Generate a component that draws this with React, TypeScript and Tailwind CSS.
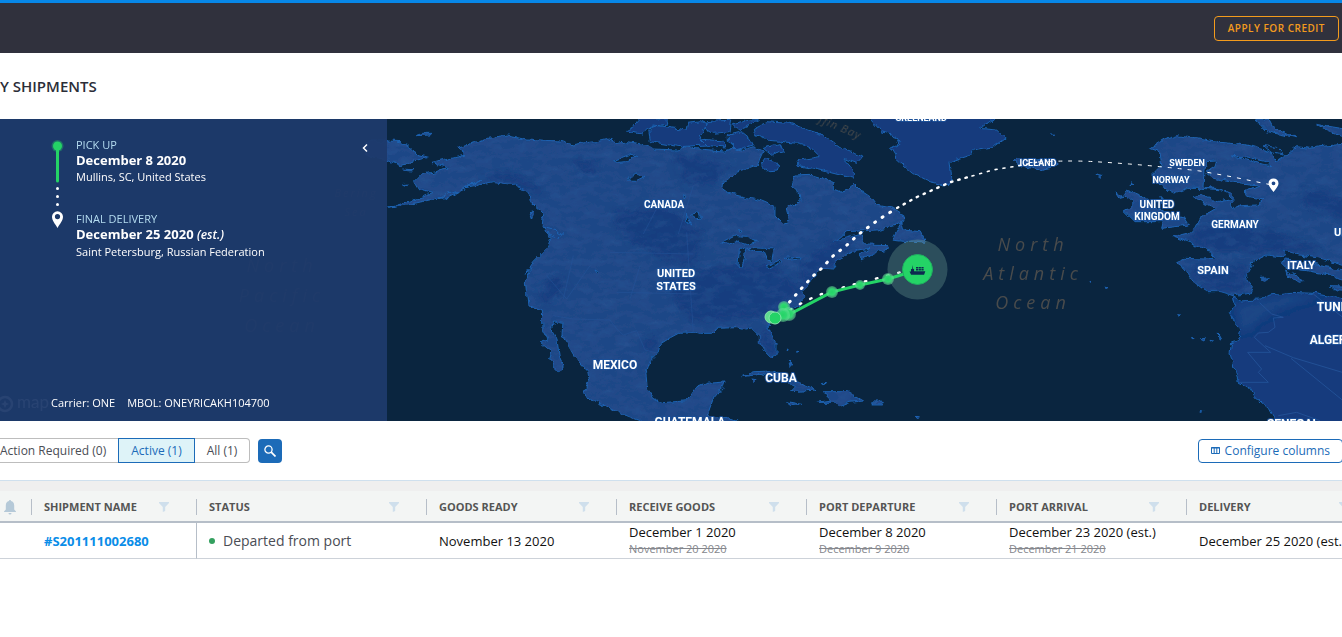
import React from "react";

const LAND = "#1f4787";
const DEEP = "#123b7d";
const COAST = "#1b62b3";
const OCEAN = "#0a253f";

const landPaths = [
  // North and Central America
  "M1371 85L1426 70 1461 58 1526 48 1581 60 1636 64 1681 66 1716 78 1761 70 1791 68 1826 60 1851 74 1881 68 1941 78 1961 90 2031 93 2051 83 2081 88 2121 92 2170 96 2200 88 2230 93 2260 83 2290 96 2280 118 2275 136 2210 160 2168 188 2165 208 2185 223 2240 236 2285 246 2325 263 2325 288 2350 313 2368 306 2362 268 2400 248 2398 223 2375 203 2387 168 2430 166 2470 178 2500 188 2500 210 2525 220 2550 210 2560 193 2580 213 2610 233 2630 258 2680 268 2705 283 2712 306 2690 318 2630 333 2540 338 2500 371 2525 358 2590 340 2585 363 2600 378 2665 380 2670 390 2640 396 2585 420 2578 408 2610 388 2570 393 2530 413 2500 428 2505 450 2465 448 2445 463 2430 488 2405 513 2415 538 2400 556 2370 568 2340 583 2305 603 2305 628 2328 673 2328 706 2312 716 2290 693 2278 673 2278 648 2260 630 2235 633 2210 626 2150 628 2135 643 2100 643 2081 638 2041 640 2011 656 1976 678 1971 703 1951 723 1938 763 1941 803 1961 838 1989 851 2061 845 2091 803 2121 790 2172 786 2165 808 2145 833 2125 888 2210 905 2210 940 1921 940 1921 905 1861 883 1821 863 1786 848 1751 823 1766 788 1761 758 1721 708 1701 673 1686 650 1689 610 1661 606 1654 633 1671 663 1679 718 1693 748 1676 758 1649 723 1656 698 1621 670 1644 663 1629 633 1627 573 1584 558 1576 488 1594 448 1576 466 1601 428 1641 388 1653 356 1626 323 1631 283 1591 248 1586 218 1546 198 1481 188 1436 198 1396 206 1446 183 1371 218 1311 238 1221 258 1161 268 1241 243 1301 223 1256 213 1241 188 1261 168 1351 148 1296 133 1376 113 1401 108Z",
  // Chukotka
  "M1100 66L1161 66 1206 68 1236 88 1251 106 1286 115 1236 128 1201 140 1161 123 1100 110Z",
  "M1246 50L1268 43 1296 43 1290 48Z",
  "M1205 150L1240 152 1238 156 1212 154ZM1205 197L1226 195 1222 200Z",
  "M1314 238L1345 224 1376 220 1345 236Z",
  // Vancouver Island and Haida Gwaii
  "M1630 325L1665 335 1688 348 1675 358 1640 340ZM1586 278L1602 276 1594 300Z",
  // Newfoundland
  "M2675 363L2705 308 2712 333 2760 338 2780 373 2700 366Z",
  // Iceland
  "M3040 128L3050 118 3080 125 3140 120 3172 132 3150 146 3115 152 3070 142Z",
  // Great Britain and Ireland
  "M3390 268L3370 273 3405 308 3490 308 3485 328 3565 318 3550 293 3490 278 3430 233 3380 213 3370 228 3405 253ZM3350 222L3372 235 3360 238ZM3392 188L3402 196 3390 197ZM3290 168L3308 172 3300 178Z",
  // Europe with Scandinavia
  "M3450 88L3490 63 3530 50 3580 58 3640 68 3740 78 3810 98 3820 118 3830 128 3860 108 3890 83 3930 88 3960 83 4060 73 4060 448 3960 418 3900 408 3850 393 3860 408 3840 413 3800 408 3760 428 3750 453 3735 478 3757 503 3750 523 3700 530 3660 518 3620 518 3580 488 3545 438 3527 428 3550 418 3610 420 3645 418 3620 388 3520 353 3580 338 3600 298 3650 268 3600 248 3580 233 3605 226 3655 250 3700 240 3670 213 3605 208 3560 208 3520 223 3480 198 3455 168 3485 138 3480 98Z",
  "M3765 0L3800 38 3890 56 3820 28 3805 0ZM3950 16L4060 34 4060 66 3980 33Z",
  // Italy, Balkans and the western islands
  "M3840 428L3860 420 3960 440 4060 458 4060 500 4000 470 3920 455 3860 448ZM3860 453L3910 488 3895 490 3865 470ZM3990 503L4060 505 4060 515 4000 512ZM3780 478L3810 476 3790 484Z",
  // Caribbean
  "M2225 773L2260 758 2320 756 2380 783 2450 813 2375 818 2390 803 2340 778 2280 766ZM2470 818L2540 818 2588 846 2550 850 2518 863 2500 850 2450 850 2495 843ZM2360 848L2405 856 2375 860ZM2615 848L2650 850 2645 858 2618 858Z",
  "M2255 780L2268 782 2262 788ZM2365 720L2378 738 2370 738ZM2358 690L2362 692 2360 694ZM2388 696L2391 698 2387 700ZM2467 793L2477 794 2470 797ZM2748 892L2758 893 2752 902Z",
  // Atlantic islands
  "M3312 505L3324 505 3320 509ZM3530 584L3542 585 3535 588ZM3574 653L3584 653 3579 657ZM3600 660L3616 658 3612 666ZM3630 664L3641 666 3636 670ZM3655 645L3662 658 3657 660ZM3600 878L3608 878 3604 882ZM3270 490L3274 491 3271 493ZM3154 48L3161 48 3158 51Z",
];

const deepPaths = [
  // Greenland
  "M2600 -20L2610 0 2645 38 2690 53 2700 73 2672 88 2690 118 2740 163 2790 188 2845 200 2855 178 2850 128 2910 108 2920 93 2980 83 3015 58 2990 33 2940 28 2980 0 2980 -20Z",
  // Arctic archipelago
  "M1876 36L1901 23 1921 0 1996 -5 2001 15 1950 25 1925 45ZM1946 33L1961 18 2061 33 2066 13 2101 8 2121 18 2101 48 2116 78 2041 83 1951 68Z",
  "M2120 8L2195 3 2190 38 2140 43 2115 28ZM2185 48L2225 38 2250 58 2260 78 2210 92 2185 68ZM2200 18L2250 3 2275 2 2255 18 2215 32ZM2100 60L2170 66 2180 84 2120 80Z",
  // Baffin Island
  "M2260 28L2300 8 2370 13 2410 28 2470 48 2520 83 2590 110 2570 133 2530 118 2560 153 2560 178 2480 158 2440 148 2390 138 2400 123 2460 113 2430 83 2390 73 2350 68 2300 63 2265 48Z",
  "M2285 138L2300 118 2340 138 2335 153 2300 156ZM2290 88L2340 73 2350 98 2315 108Z",
  // North-west Africa
  "M3700 533L3720 546 3780 543 3810 528 3870 520 3940 523 3990 533 4060 545 4060 940 3825 940 3825 905 3805 868 3765 833 3750 808 3715 788 3700 738 3690 703 3695 668 3715 663 3722 633 3700 608 3688 583 3705 558Z",
];

const waterPaths = [
  // Great Lakes and Canadian lakes
  "M2165 372L2210 350 2240 352 2272 368 2240 374 2215 366 2185 376ZM2218 392L2238 385 2232 420 2225 445 2214 440ZM2240 385L2290 388 2322 390 2315 425 2300 420 2290 398 2265 398ZM2295 443L2340 425 2345 430 2310 446ZM2352 418L2400 415 2403 420 2360 424Z",
  "M1841 125L1885 108 1910 112 1880 128 1850 130ZM1881 183L1905 165 1935 172 1910 184ZM2078 285L2098 282 2101 300 2090 303ZM2058 282L2075 318 2060 305ZM2047 232L2056 228 2050 240ZM1782 450L1793 456 1790 462ZM2215 332L2226 333 2222 338Z",
  // Baltic Sea, White Sea and the Gulf of Finland
  "M3615 154L3620 128 3650 126 3645 143 3620 160 3640 178 3700 190 3780 198 3765 205 3740 212 3738 235 3790 243 3770 258 3720 260 3700 270 3690 255 3705 238 3690 223 3660 210 3612 204Z",
  "M3695 113L3730 112 3800 128 3815 140 3790 136 3750 126ZM3790 80L3830 85 3850 108 3820 102ZM3480 232L3495 250 3485 254Z",
];

const placeLabels: [string, number, number, number][] = [
  ["CANADA", 664, 89, 10],
  ["UNITED", 676, 158, 11],
  ["STATES", 676, 171, 11],
  ["MEXICO", 615, 250, 12],
  ["CUBA", 781, 263, 12],
  ["GUATEMALA", 690, 307, 12],
  ["GREENLAND", 921, 2, 9],
  ["ICELAND", 1038, 47, 9],
  ["SWEDEN", 1187, 47, 9],
  ["NORWAY", 1171, 64, 9],
  ["UNITED", 1157, 89, 10],
  ["KINGDOM", 1157, 101, 10],
  ["GERMANY", 1235, 109, 10],
  ["UKRAINE", 1357, 117, 11],
  ["SPAIN", 1213, 155, 11],
  ["ITALY", 1301, 150, 11],
  ["TUNISIA", 1340, 192, 12],
  ["ALGERIA", 1334, 225, 12],
  ["SENEGAL", 1293, 309, 12],
];

const seaLabels: [string, number, number][] = [
  ["North", 1033, 132],
  ["Atlantic", 1033, 161],
  ["Ocean", 1033, 190],
  ["North", 282, 153],
  ["Pacific", 282, 183],
  ["Ocean", 282, 213],
];

function MapCanvas() {
  return (
    <svg
      className="absolute inset-0 h-full w-full"
      viewBox="0 0 1342 302"
      preserveAspectRatio="xMinYMid slice"
      aria-label="Shipment route map"
      role="img"
    >
      <defs>
        <filter id="rough" x="-5%" y="-5%" width="110%" height="110%">
          <feTurbulence type="fractalNoise" baseFrequency="0.13" numOctaves="3" seed="4" result="n" />
          <feDisplacementMap in="SourceGraphic" in2="n" scale="6" xChannelSelector="R" yChannelSelector="G" />
        </filter>
        <filter id="soft" x="-20%" y="-20%" width="140%" height="140%">
          <feGaussianBlur stdDeviation="9" />
        </filter>
        <filter id="relief" x="0" y="0" width="100%" height="100%">
          <feTurbulence type="fractalNoise" baseFrequency="0.02 0.05" numOctaves="3" seed="9" />
          <feColorMatrix values="0 0 0 0 0.06  0 0 0 0 0.2  0 0 0 0 0.46  1.6 0 0 0 -0.62" />
        </filter>
        <clipPath id="landClip">
          {landPaths.map((d) => (
            <path key={d} d={d} />
          ))}
        </clipPath>
        <radialGradient id="node">
          <stop offset="0" stopColor="#24d366" />
          <stop offset="0.5" stopColor="#2fd770" />
          <stop offset="1" stopColor="#6fe39c" stopOpacity="0.45" />
        </radialGradient>
      </defs>
      <rect x="-600" width="3200" height="302" fill={OCEAN} />
      <g filter="url(#rough)">
        <g transform="scale(.33333)" strokeLinejoin="round">
          <g fill={LAND} stroke={COAST} strokeWidth="3">
            {landPaths.map((d) => (
              <path key={d} d={d} />
            ))}
          </g>
          <g clipPath="url(#landClip)">
            <g filter="url(#soft)" fill={DEEP} opacity=".75">
              <path d="M1440 165L1520 160 1600 190 1640 230 1560 205 1480 180ZM1720 120L1790 130 1790 170 1740 160ZM1840 280L2000 260 2110 340 2080 440 1990 420 1860 350ZM2020 100L2200 130 2150 190 2060 200ZM1610 510L1680 460 1700 500 1640 560ZM2000 480L2110 450 2320 430 2400 520 2300 590 2080 610 2030 560ZM1930 670L1970 640 1960 720ZM2270 640L2320 640 2330 710 2290 690ZM2480 370L2580 350 2520 420 2400 540 2400 440ZM3560 350L3650 300 3800 330 3980 390 3800 400 3640 400ZM3560 440L3740 440 3740 520 3620 510ZM3900 200L4040 240 4040 300 3920 270Z" />
            </g>
            <rect x="1100" width="2960" height="906" filter="url(#relief)" opacity=".25" />
          </g>
          <g fill={DEEP} stroke={COAST} strokeWidth="3">
            {deepPaths.map((d) => (
              <path key={d} d={d} />
            ))}
          </g>
          <path
            d="M3710 560L3860 530 3960 530 3840 570 3780 600 3740 640 3720 620Z"
            fill="#244d8b"
            opacity=".6"
            filter="url(#soft)"
          />
          <g fill={OCEAN} stroke={COAST} strokeWidth="3">
            {waterPaths.map((d) => (
              <path key={d} d={d} />
            ))}
          </g>
        </g>
      </g>
      <g transform="scale(.33333)" fill="none" stroke="#24549a" strokeWidth="2.5">
        <path d="M3779 551L3815 585 3850 595 3820 597 3825 625 3805 640 3775 642 3763 655 3812 700 3743 700 3785 750 3775 760 3805 790 3718 790M3795 680L3880 716 4060 770M3873 718L4060 870M3940 525L4060 620M3835 890L3890 880 3960 905" />
        <path
          d="M1660 590L1720 600 1830 603 1850 630 1870 648 1910 635 1935 693 1971 702M1640 470L1700 540 1770 440M1720 410L1690 540M1890 540L1920 440M1830 400L2080 405M1850 520L2090 525M2060 340L2080 640M1930 345L1985 240M2035 345L2080 200"
          opacity=".6"
        />
      </g>

      <g fill="#56534f" fontFamily="'Open Sans', sans-serif" fontStyle="italic" opacity=".85">
        {seaLabels.map(([text, x, y]) => (
          <text key={text + x + y} x={x} y={y} textAnchor="middle" className="text-[18px] tracking-[5px]">
            {text}
          </text>
        ))}
        <text x="818" y="3" className="text-[11px] tracking-[1px]" transform="rotate(23 818 3)">
          ffin Bay
        </text>
        <text x="356" y="78" textAnchor="middle" className="text-[11px] tracking-[2px]">
          Bering
        </text>
        <text x="356" y="97" textAnchor="middle" className="text-[11px] tracking-[2px]">
          Sea
        </text>
      </g>
      <g opacity=".9">
        <circle cx="5" cy="285" r="7" fill="none" stroke="#fff" strokeWidth="2.5" />
        <path d="M5 281l1.2 2.8 2.8 1.2-2.8 1.2L5 289l-1.200-2.800L1 285l2.800-1.200z" fill="#fff" />
        <text x="17" y="289" fill="#fff" className="text-[17px]" fontFamily="Lato, sans-serif">
          map
        </text>
      </g>
      <g
        fill="#fff"
        stroke="#1b5098"
        strokeWidth="2"
        strokeLinejoin="round"
        paintOrder="stroke"
        fontFamily="Roboto, sans-serif"
        fontWeight="700"
        textAnchor="middle"
      >
        {placeLabels.map(([text, x, y, size]) => (
          <text key={text + x + y} x={x} y={y} fontSize={size}>
            {text}
          </text>
        ))}
      </g>

      <g fill="none" stroke="#fff" strokeLinecap="round">
        <path
          d="M777 196L787 186 800 171 813 157 821 150 833 137 847 126 859 115 878 101 897 89"
          strokeWidth="3"
          strokeDasharray="1 8"
        />
        <path d="M897 89L917 78 937 69 951 63 972 57" strokeWidth="2.4" strokeDasharray="1.5 6" />
        <path d="M972 57L993 51 1017 47 1038 43" strokeWidth="1.6" strokeDasharray="2 6" />
        <path
          d="M1038 43Q1073 41 1100 43Q1150 46 1200 52L1233 58 1272 66"
          strokeWidth="1"
          strokeLinecap="butt"
          strokeDasharray="4 6"
        />
        <path d="M790 191Q810 178 834 171T917 149" strokeWidth="2.4" strokeDasharray="1.5 10" />
      </g>
      <circle cx="917.5" cy="150.5" r="30" fill="#7fae9f" opacity=".3" />
      <path d="M775 199L788 196 832 173 860 166 888 160 917 151" fill="none" stroke="#24d366" strokeWidth="3" />
      <g fill="url(#node)">
        <circle cx="784" cy="188" r="6" />
        <circle cx="832" cy="173" r="6" />
        <circle cx="860" cy="166" r="5" />
        <circle cx="888" cy="160" r="6" />
        <circle cx="789" cy="195" r="7" />
        <circle cx="783" cy="196" r="7" />
      </g>
      <circle cx="771" cy="198" r="6" fill="#5fdc90" stroke="#8be5ac" />
      <circle cx="775" cy="199" r="6" fill="#24d366" stroke="#8be5ac" />
      <circle cx="917.5" cy="150.5" r="15" fill="#24d366" stroke="#1fae61" strokeWidth="1" />
      <g fill="#0d2a50">
        <path d="M909.5 152.5h1.500v-2.500h1.200l.4-4 .6 4h.9v2.300H925.300l-1.200 3.400h-13z" />
        <path d="M916 148h2.200v1.600H916zM918.700 148h2.200v1.600h-2.200zM921.400 148h2.200v1.600h-2.200zM916 150.100h2.200v1.500H916zM918.700 150.100h2.200v1.500h-2.200zM921.400 150.100h2.200v1.500h-2.200z" />
      </g>
      <path
        d="M1273.5 73c-2.800-3.800-5-6.200-5-8.600a5 5 0 0 1 10 0c0 2.400-2.200 4.800-5 8.600zm0-10.600a1.900 1.900 0 1 0 0 3.800 1.900 1.900 0 0 0 0-3.800z"
        fill="#fff"
        fillRule="evenodd"
      />
    </svg>
  );
}

function RoutePanel() {
  return (
    <div className="relative flex h-[302px] w-[387px] flex-col justify-between bg-[#1d3a6c]/95 text-white">
      <div className="flex items-start pt-[18px]">
        <svg className="ml-[50px] mt-[2px] h-[90px] w-4 shrink-0" viewBox="0 0 16 90" aria-hidden="true">
          <circle cx="7.5" cy="7" r="6" fill="#24d366" opacity=".35" />
          <circle cx="7.5" cy="7" r="4.5" fill="#24d366" />
          <path d="M7.500 7v35" stroke="#24d366" strokeWidth="3" strokeLinecap="round" />
          <g fill="#fff">
            <circle cx="7.5" cy="49.5" r="1.5" />
            <circle cx="7.5" cy="57.5" r="1.5" />
            <circle cx="7.5" cy="65.5" r="1.5" />
            <path
              d="M7.500 89C4.800 84.500 2 81.500 2 77.800a5.500 5.500 0 0 1 11 0c0 3.700-2.800 6.700-5.500 11.200zm0-14a2.600 2.600 0 1 0 0 5.200 2.600 2.600 0 0 0 0-5.200z"
              fillRule="evenodd"
            />
          </g>
        </svg>
        <div className="ml-[10px] flex flex-1 flex-col gap-[26px]">
          <div className="text-[11px] font-medium leading-4">
            <p className="text-[#b4dcf0]">PICK UP</p>
            <p className="text-[13px] font-bold leading-[15px]">December 8 2020</p>
            <p className="leading-[17px]">Mullins, SC, United States</p>
          </div>
          <div className="text-[11px] font-medium leading-4">
            <p className="text-[#b4dcf0]">FINAL DELIVERY</p>
            <p className="text-[13px] font-bold leading-[15px]">
              December 25 2020 <em className="text-xs font-semibold">(est.)</em>
            </p>
            <p className="leading-[17px]">Saint Petersburg, Russian Federation</p>
          </div>
        </div>
        <button type="button" aria-label="Collapse panel" className="mr-[18px] mt-[6px]">
          <svg width="8" height="10" viewBox="0 0 8 10" fill="none" stroke="#fff" strokeWidth="1.5">
            <path d="M6 1.500L2.500 5 6 8.500" />
          </svg>
        </button>
      </div>
      <p className="flex gap-3 pb-[10px] pl-[51px] text-[11px] font-medium leading-4">
        <span>Carrier: ONE</span>
        <span>MBOL: ONEYRICAKH104700</span>
      </p>
    </div>
  );
}

function FilterIcon() {
  return (
    <svg width="10" height="10" viewBox="0 0 10 10" fill="#cfdfec" aria-hidden="true">
      <path d="M0 0h10v1L6.200 5v4L3.800 10V5L0 1z" />
    </svg>
  );
}

type Column = { title: string; width: string; value: React.ReactNode; was?: string };

const columns: Column[] = [
  {
    title: "SHIPMENT NAME",
    width: "w-[165px]",
    value: (
      <a href="#shipment" className="font-bold text-[#0a8de8]">
        #S201111002680
      </a>
    ),
  },
  {
    title: "STATUS",
    width: "w-[230px]",
    value: (
      <span className="flex items-center gap-2 text-sm text-[#4a4d55]">
        <span className="h-[6px] w-[6px] rounded-full bg-[#34a05f]" />
        Departed from port
      </span>
    ),
  },
  { title: "GOODS READY", width: "w-[190px]", value: "November 13 2020" },
  { title: "RECEIVE GOODS", width: "w-[190px]", value: "December 1 2020", was: "November 20 2020" },
  { title: "PORT DEPARTURE", width: "w-[190px]", value: "December 8 2020", was: "December 9 2020" },
  { title: "PORT ARRIVAL", width: "w-[190px]", value: "December 23 2020 (est.)", was: "December 21 2020" },
  { title: "DELIVERY", width: "w-[190px]", value: "December 25 2020 (est.)" },
];

function ShipmentTable() {
  return (
    <div className="overflow-hidden border-t border-[#cfe0ee] bg-[#efefef] pt-[10px]">
      <table className="w-[1377px] table-fixed border-separate border-spacing-0 bg-white text-left">
        <thead>
          <tr className="h-8 bg-[#f3f5f4]">
            <th className="w-8 border-b-2 border-[#b6bec8] p-0 pt-[2px] align-middle">
              <div className="flex h-4 items-center border-r border-[#b6bec8] pl-1">
                <svg width="12" height="15" viewBox="0 0 12 15" fill="#b5c9d8" role="img" aria-label="Alerts">
                  <path d="M6 0c.7 0 1 .5 1 1 2 .5 3.200 2 3.200 4.500v4L12 11.500V12H0v-.5l1.800-2v-4C1.800 3 3 1.500 5 1c0-.5.3-1 1-1zM4.500 13h3a1.500 1.500 0 0 1-3 0z" />
                </svg>
              </div>
            </th>
            {columns.map((c) => (
              <th key={c.title} className={`${c.width} border-b-2 border-[#b6bec8] p-0 pt-[2px] align-middle`}>
                <div className="flex h-4 items-center justify-between border-r border-[#b6bec8] pl-3 pr-[27px] text-[11px] font-bold leading-4 text-[#555]">
                  {c.title}
                  <FilterIcon />
                </div>
              </th>
            ))}
          </tr>
        </thead>
        <tbody>
          <tr className="h-9 text-[13px] leading-4 text-[#111]">
            <td className="border-b border-[#cdd2d9] p-0" />
            {columns.map((c) => (
              <td
                key={c.title}
                className={`${c.title === "SHIPMENT NAME" ? "border-r border-r-[#b6bec8]" : ""} border-b border-b-[#cdd2d9] py-0 pl-3 pr-0 align-middle whitespace-nowrap`}
              >
                {c.value}
                {c.was && <del className="block text-[11px] leading-[17px] text-[#85878d]">{c.was}</del>}
              </td>
            ))}
          </tr>
        </tbody>
      </table>
    </div>
  );
}

export default function App() {
  return (
    <div className="min-h-screen overflow-hidden bg-white font-['Open_Sans','Noto_Sans',sans-serif]">
      <header className="flex h-[53px] items-center justify-end border-t-[3px] border-[#0787e8] bg-[#30313d] pr-[3px]">
        <button
          type="button"
          className="h-[25px] rounded border border-[#f39b1d] px-[13px] text-[10px] font-semibold tracking-[0.5px] text-[#f39b1d]"
        >
          APPLY FOR CREDIT
        </button>
      </header>
      <main>
        <h1 className="flex h-[66px] items-center text-[15px] font-semibold text-[#2b2d38]">Y SHIPMENTS</h1>
        <section className="relative overflow-hidden">
          <MapCanvas />
          <RoutePanel />
        </section>
        <div className="flex h-[59px] items-center justify-between">
          <div className="flex items-center text-xs text-[#4a4d55]">
            <button type="button" className="h-[25px] border-y border-[#bdbdbd] pr-3">
              Action Required (0)
            </button>
            <button type="button" className="h-[25px] border border-[#1c6bb8] bg-[#def3f8] px-3 text-[#1c6bb8]">
              Active (1)
            </button>
            <button type="button" className="h-[25px] rounded-r border border-l-0 border-[#bdbdbd] px-3">
              All (1)
            </button>
            <button
              type="button"
              aria-label="Search"
              className="ml-2 flex h-6 w-6 items-center justify-center rounded bg-[#1c6bb8]"
            >
              <svg width="12" height="12" viewBox="0 0 12 12" fill="none" stroke="#fff" strokeWidth="1.3">
                <circle cx="4.5" cy="4.5" r="3.6" />
                <path d="M7.200 7.200L11.500 11.500" strokeWidth="1.7" />
              </svg>
            </button>
          </div>
          <button
            type="button"
            className="-mr-px flex h-6 items-center gap-[5px] rounded border border-[#1c6bb8] px-3 text-xs text-[#1c6bb8]"
          >
            <svg width="9" height="7" viewBox="0 0 9 7" fill="none" stroke="currentColor" aria-hidden="true">
              <path d="M.5.500h8v6h-8zM3.200.500v6M5.800.500v6M0 1h9" />
            </svg>
            Configure columns
          </button>
        </div>
        <ShipmentTable />
      </main>
    </div>
  );
}
